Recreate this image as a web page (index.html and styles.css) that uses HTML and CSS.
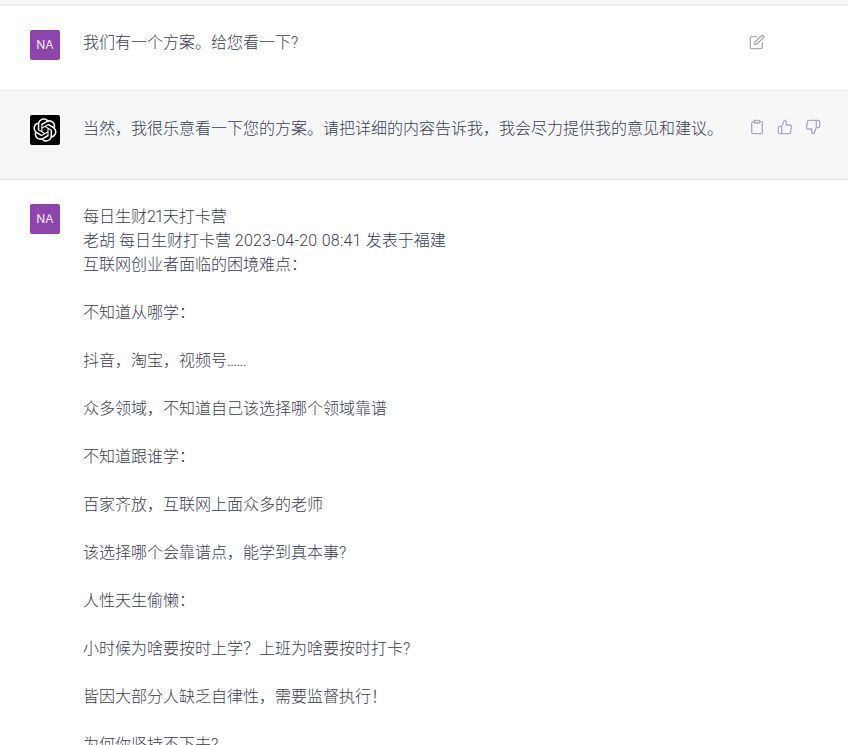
FILE: index.html
```html
<!DOCTYPE html>
<html lang="zh-CN">
<head>
    <meta charset="UTF-8">
    <meta name="viewport" content="width=device-width, initial-scale=1.0">
    <title>Chat</title>
    <link rel="stylesheet" href="styles.css">
</head>
<body>
    <div class="top-strip"></div>

    <div class="message user-first">
        <div class="avatar user">NA</div>
        <div class="content">我们有一个方案。给您看一下?</div>
        <div class="actions">
            <svg class="icon" viewBox="0 0 24 24"><path d="M11 4H4a2 2 0 0 0-2 2v14a2 2 0 0 0 2 2h14a2 2 0 0 0 2-2v-7"/><path d="M18.5 2.500a2.121 2.121 0 0 1 3 3L12 15l-4 1 1-4 9.500-9.500z"/></svg>
        </div>
    </div>

    <div class="message bot">
        <div class="avatar logo">
            <svg viewBox="0 0 41 41"><path fill="#fff" d="M37.5324 16.8707C37.9808 15.5241 38.1363 14.0974 37.9886 12.6859C37.8409 11.2744 37.3934 9.91076 36.676 8.68622C35.6126 6.83404 33.9882 5.3676 32.0373 4.4985C30.0864 3.62941 27.9098 3.40259 25.8215 3.85078C24.8796 2.7893 23.7219 1.94125 22.4257 1.36341C21.1295 0.785575 19.7249 0.491269 18.3058 0.500197C16.1708 0.495044 14.0893 1.16803 12.3614 2.42214C10.6335 3.67624 9.34853 5.44666 8.6917 7.47815C7.30085 7.76286 5.98686 8.3414 4.8377 9.17505C3.68854 10.0087 2.73073 11.0782 2.02839 12.312C0.956464 14.1591 0.498905 16.2988 0.721698 18.4228C0.944492 20.5467 1.83612 22.5449 3.268 24.1293C2.81966 25.4759 2.66413 26.9026 2.81182 28.3141C2.95951 29.7256 3.40701 31.0892 4.12437 32.3138C5.18791 34.1659 6.8123 35.6322 8.76321 36.5013C10.7141 37.3704 12.8907 37.5973 14.9789 37.1492C15.9208 38.2107 17.0786 39.0587 18.3747 39.6366C19.6709 40.2144 21.0755 40.5087 22.4946 40.4998C24.6307 40.5054 26.7133 39.8321 28.4418 38.5772C30.1704 37.3223 31.4556 35.5506 32.1119 33.5179C33.5027 33.2332 34.8167 32.6547 35.9659 31.821C37.115 30.9874 38.0728 29.9178 38.7752 28.684C39.8458 26.8371 40.3023 24.6979 40.0789 22.5748C39.8556 20.4517 38.9639 18.4544 37.5324 16.8707ZM22.4978 37.8849C20.7443 37.8874 19.0459 37.2733 17.6994 36.1501C17.7601 36.117 17.8666 36.0586 17.936 36.0161L25.9004 31.4156C26.1003 31.3019 26.2663 31.137 26.3813 30.9378C26.4964 30.7386 26.5563 30.5124 26.5549 30.2825V19.0542L29.9213 20.998C29.9389 21.0068 29.9541 21.0198 29.9656 21.0359C29.977 21.052 29.9842 21.0707 29.9867 21.0902V30.3889C29.9842 32.375 29.1946 34.2791 27.7909 35.6841C26.3872 37.0892 24.4838 37.8806 22.4978 37.8849ZM6.39227 31.0064C5.51397 29.4888 5.19742 27.7107 5.49804 25.9832C5.55718 26.0187 5.66048 26.0818 5.73461 26.1244L13.699 30.7248C13.8975 30.8408 14.1233 30.902 14.3532 30.902C14.583 30.902 14.8088 30.8408 15.0073 30.7248L24.731 25.1103V28.9979C24.7321 29.0177 24.7283 29.0376 24.7199 29.0556C24.7115 29.0736 24.6988 29.0893 24.6829 29.1012L16.6317 33.7497C14.9096 34.7416 12.8643 35.0097 10.9447 34.4954C9.02506 33.9811 7.38785 32.7263 6.39227 31.0064ZM4.29707 13.6194C5.17156 12.0998 6.55279 10.9364 8.19885 10.3327C8.19885 10.4013 8.19491 10.5228 8.19491 10.6071V19.808C8.19351 20.0378 8.25334 20.2638 8.36823 20.4629C8.48312 20.6619 8.64893 20.8267 8.84863 20.9404L18.5723 26.5542L15.206 28.4979C15.1894 28.5089 15.1703 28.5155 15.1505 28.5173C15.1307 28.5191 15.1107 28.516 15.0924 28.5082L7.04046 23.8557C5.32135 22.8601 4.06716 21.2235 3.55289 19.3046C3.03862 17.3858 3.30624 15.3413 4.29707 13.6194ZM31.955 20.0556L22.2312 14.4411L25.5976 12.4981C25.6142 12.4872 25.6333 12.4805 25.6531 12.4787C25.6729 12.4769 25.6928 12.4801 25.7111 12.4879L33.7631 17.1364C34.9967 17.849 36.0017 18.8982 36.6606 20.1613C37.3194 21.4244 37.6047 22.849 37.4832 24.2684C37.3617 25.6878 36.8382 27.0432 35.9743 28.1759C35.1103 29.3086 33.9415 30.1717 32.6047 30.6641C32.6047 30.5947 32.6047 30.4733 32.6047 30.3889V21.188C32.6066 20.9586 32.5474 20.7328 32.4332 20.5338C32.319 20.3348 32.154 20.1698 31.955 20.0556ZM35.3055 15.0128C35.2464 14.9765 35.1431 14.9142 35.069 14.8717L27.1045 10.2712C26.906 10.1554 26.6803 10.0943 26.4504 10.0943C26.2206 10.0943 25.9948 10.1554 25.7963 10.2712L16.0726 15.8858V11.9982C16.0715 11.9783 16.0753 11.9585 16.0837 11.9405C16.0921 11.9225 16.1048 11.9068 16.1207 11.8949L24.1719 7.25025C25.4053 6.53903 26.8158 6.19376 28.2383 6.25482C29.6608 6.31589 31.0364 6.78077 32.2044 7.59508C33.3723 8.40939 34.2842 9.53945 34.8334 10.8531C35.3826 12.1667 35.5464 13.6095 35.3055 15.0128ZM14.2424 21.9419L10.8752 19.9981C10.8576 19.9893 10.8423 19.9763 10.8309 19.9602C10.8195 19.9441 10.8122 19.9254 10.8098 19.9058V10.6071C10.8107 9.18295 11.2173 7.78848 11.9819 6.58696C12.7466 5.38544 13.8377 4.42659 15.1275 3.82264C16.4173 3.21869 17.8524 2.99464 19.2649 3.1767C20.6775 3.35876 22.0089 3.93941 23.1034 4.85067C23.0427 4.88379 22.937 4.94215 22.8668 4.98473L14.9024 9.58517C14.7025 9.69878 14.5366 9.86356 14.4215 10.0626C14.3065 10.2616 14.2466 10.4877 14.2479 10.7175L14.2424 21.9419ZM16.071 17.9991L20.4018 15.4978L24.7325 17.9975V22.9985L20.4018 25.4983L16.071 22.9985V17.9991Z"/></svg>
        </div>
        <div class="content">当然，我很乐意看一下您的方案。请把详细的内容告诉我，我会尽力提供我的意见和建议。</div>
        <div class="actions">
            <svg class="icon" viewBox="0 0 24 24"><path d="M16 4h2a2 2 0 0 1 2 2v14a2 2 0 0 1-2 2H6a2 2 0 0 1-2-2V6a2 2 0 0 1 2-2h2"/><rect x="8" y="2" width="8" height="4" rx="1"/></svg>
            <svg class="icon" viewBox="0 0 24 24"><path d="M14 9V5a3 3 0 0 0-3-3l-4 9v11h11.280a2 2 0 0 0 2-1.700l1.380-9a2 2 0 0 0-2-2.300zM7 22H4a2 2 0 0 1-2-2v-7a2 2 0 0 1 2-2h3"/></svg>
            <svg class="icon" viewBox="0 0 24 24"><path d="M10 15v4a3 3 0 0 0 3 3l4-9V2H5.720a2 2 0 0 0-2 1.700l-1.380 9a2 2 0 0 0 2 2.300zm7-13h2.670A2.310 2.310 0 0 1 22 4v7a2.310 2.310 0 0 1-2.330 2H17"/></svg>
        </div>
    </div>

    <div class="message">
        <div class="avatar user">NA</div>
        <div class="content">
            <p>每日生财<span class="tight">21</span>天打卡营<br>老胡 每日生财打卡营 <span class="date">2023-04-20 08:41</span> 发表于福建<br>互联网创业者面临的困境难点：</p>
            <p>不知道从哪学：</p>
            <p>抖音，淘宝，视频号<span class="dots">......</span></p>
            <p>众多领域，不知道自己该选择哪个领域靠谱</p>
            <p>不知道跟谁学：</p>
            <p>百家齐放，互联网上面众多的老师</p>
            <p>该选择哪个会靠谱点，能学到真本事?</p>
            <p>人性天生偷懒：</p>
            <p>小时候为啥要按时上学？上班为啥要按时打卡?</p>
            <p>皆因大部分人缺乏自律性，需要监督执行！</p>
            <p>为何你坚持不下去?</p>
        </div>
    </div>
</body>
</html>
```

FILE: styles.css
```css
html, body {
    height: 100%;
}

body {
    margin: 0;
    overflow: hidden;
    background-color: #fff;
    color: #374151;
    font-family: Roboto, "Noto Sans CJK SC", sans-serif;
    font-size: 16px;
    line-height: 24px;
}

.top-strip {
    height: 4px;
    background-color: #f7f7f8;
    border-bottom: 2px solid #ececec;
}

.message {
    display: flex;
    padding: 24px 27px 0 30px;
    border-bottom: 1px solid #e5e5e5;
}

.user-first {
    height: 60px;
    border-bottom-color: #ececec;
}

.bot {
    height: 64px;
    background-color: #f7f7f8;
}

.avatar {
    flex: none;
    width: 30px;
    height: 30px;
    border-radius: 2px;
    display: flex;
    align-items: center;
    justify-content: center;
    margin-right: 23px;
}

.avatar.user {
    background-color: #8e44ad;
    color: #f3e9f7;
    font-family: Inter, sans-serif;
    font-size: 12px;
}

.avatar.logo {
    background-color: #000;
}

.avatar.logo svg {
    width: 24px;
    height: 24px;
}

.content {
    flex: 1;
    padding-top: 1px;
    font-weight: 300;
    white-space: nowrap;
}

.bot .content {
    padding-top: 2px;
}

.content p {
    margin: 0 0 24px;
}

.tight {
    letter-spacing: -1px;
}

.date {
    letter-spacing: 0.25px;
}

.dots {
    letter-spacing: -0.7px;
}

.actions {
    flex: none;
    display: flex;
    gap: 12px;
    width: 72px;
    padding-top: 4px;
}

.icon {
    width: 16px;
    height: 16px;
    fill: none;
    stroke: #acacbe;
    stroke-width: 2;
    stroke-linecap: round;
    stroke-linejoin: round;
}
```
